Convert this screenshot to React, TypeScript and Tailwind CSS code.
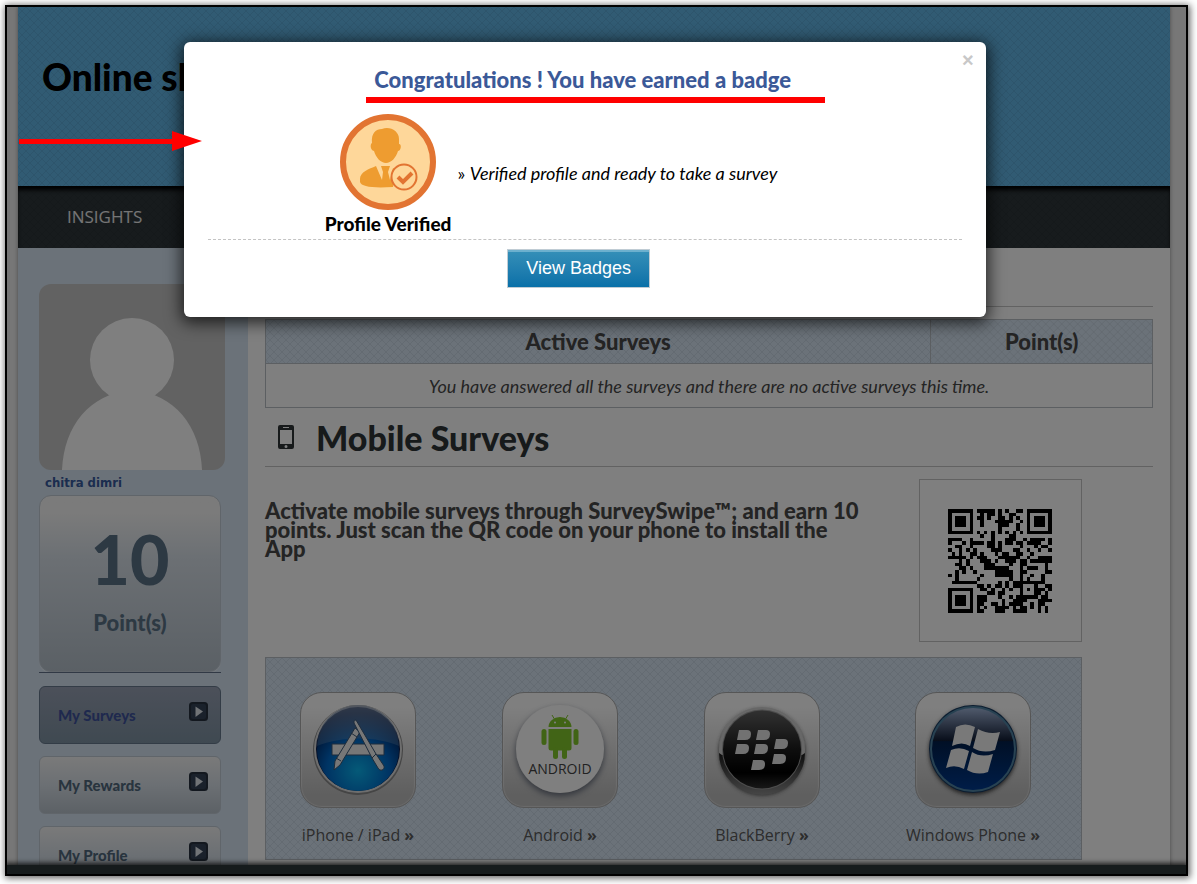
import type { ReactNode } from 'react'
import { clsx } from 'clsx'

const QR_ROWS = [
  '#######.#####.#.#..##.#######',
  '#.....#..#.##.#..##...#.....#',
  '#.###.#.##.#..##.#.#..#.###.#',
  '#.###.#..#...#####..#.#.###.#',
  '#.###.#..#....###..#..#.###.#',
  '#.....#.......#....#..#.....#',
  '#######.#.#.#.#.#.#.#.#######',
  '.........#..#....##..........',
  '####..#.....#...###..#.####.#',
  '#...#.####.##.#.##.##.####..#',
  '..##..#....##.#.....#...#.##.',
  '#..#.#.#....###...##..#..#..#',
  '.#.#..##.#...#.##..##..#.....',
  '#####.#.###...######..#..####',
  '...#.#...###.#..###.##.######',
  '..##.#....###....#..##.....#.',
  '...##.#...#######...#.###..#.',
  '..#.#..#.....#####..##.....##',
  '#.#......#...#####..#..#..#..',
  '..#.....#........#..#.#...#..',
  '.#######......#.#.#########..',
  '........##.#.##.#.###...#..##',
  '#######..##.#..#.#..#.#.###.#',
  '#.....#....##.##....#...##.#.',
  '#.###.#.###...#..#.######.##.',
  '#.###.#.###....#..####...####',
  '#.###.#.##..##.#.####..#.##..',
  '#.....#.#.#..####.#.##.#.#.#.',
  '#######.##...###..####...#.#.',
]

const MENU = [
  { label: 'My Surveys', active: true },
  { label: 'My Rewards', active: false },
  { label: 'My Profile', active: false },
]

const hatch =
  'bg-[linear-gradient(45deg,transparent_46%,#0000000f_46%,#0000000f_54%,transparent_54%),linear-gradient(-45deg,transparent_46%,#0000000f_46%,#0000000f_54%,transparent_54%)] bg-size-[8px_8px]'

export default function App() {
  return (
    <div className="h-screen bg-white pt-[5px] pr-[9px] pb-2 pl-[5px] font-['Lato',sans-serif]">
      <div className="relative h-full overflow-hidden border-2 border-black bg-[#eeeeee] pr-4 pl-[11px] shadow-[1px_1px_7px_1px_#000000a0]">
        <div className="shadow-[0_0_4px_#00000060]">
          <Header />
          <div className="flex bg-white">
            <Sidebar />
            <Surveys />
          </div>
        </div>
        <div className="absolute inset-x-0 bottom-0 h-[9px] bg-[#2c3738] shadow-[0_0_5px_2px_#000000c0]" />
        <div className="absolute inset-0 bg-black/50" />
        <BadgeDialog />
        <Pointer />
      </div>
    </div>
  )
}

function Header() {
  return (
    <header>
      <div className={clsx('h-[179px] bg-[#62b6e6] px-6 pt-[46px]', hatch)}>
        <h1 className="text-[37px] leading-[48px] font-black text-black">Online shopping</h1>
      </div>
      <nav
        className={clsx(
          'flex h-[62px] items-center bg-[#2e363a] px-[49px] shadow-[inset_0_5px_4px_-1px_#000000]',
          hatch,
        )}
      >
        <a href="#insights" className="font-['Open_Sans',sans-serif] text-[17px] text-white/90">
          INSIGHTS
        </a>
      </nav>
    </header>
  )
}

function Sidebar() {
  return (
    <aside className="w-[230px] shrink-0 bg-[#d6e4f2] pt-9 pl-[21px]">
      <svg viewBox="0 0 186 186" className="size-[186px] rounded-xl bg-[#c5c5c5]" role="img" aria-label="chitra dimri">
        <circle cx="93" cy="76" r="42" fill="#fff" />
        <path d="M23 186C25 142 50 110 93 106c43 4 68 36 70 80z" fill="#fff" />
      </svg>
      <a
        href="#profile"
        className="block pl-1.5 font-['DejaVu_Sans_Condensed','DejaVu_Sans',sans-serif] text-[13px] leading-[25px] font-bold text-[#365a9e]"
      >
        chitra dimri
      </a>
      <div className="flex h-[177px] w-[182px] flex-col items-center rounded-xl border border-[#c0cad4] bg-linear-to-b from-[#f6f6f6] from-10% via-[#d8e0e8] via-35% to-[#b6c1cb] pt-[30px] font-black text-[#5a7287] shadow-[0_1px_1px_#ffffff80]">
        <span className="text-[68px] leading-[66px]">10</span>
        <span className="mt-[15px] text-[22px] leading-8">Point(s)</span>
      </div>
      <div className="w-[182px] border-b border-[#62738a]" />
      <ul className="mt-[13px] flex w-[182px] flex-col gap-3">
        {MENU.map(({ label, active }) => (
          <li key={label}>
            <a
              href="#menu"
              className={clsx(
                'flex h-[58px] items-center justify-between rounded-md border bg-linear-to-b pr-3 pl-[18px] text-[15px] font-black',
                active
                  ? 'border-[#66788c] from-[#98a1b4] to-[#7f93a3] text-[#3e539c]'
                  : 'border-[#c0cad4] from-[#f4f4f4] via-[#d8e0e8] to-[#b9c3cc] text-[#50687d]',
              )}
            >
              {label}
              <ArrowBox />
            </a>
          </li>
        ))}
      </ul>
    </aside>
  )
}

function ArrowBox() {
  return (
    <svg viewBox="0 0 19 19" className="mb-2 size-[19px]" aria-hidden="true">
      <rect width="19" height="19" rx="3.5" fill="#26303e" />
      <rect x="2" y="2" width="15" height="15" rx="2" fill="#344256" />
      <path d="M6.500 4.500 14 9.500 6.500 15z" fill="#e2e8ee" />
    </svg>
  )
}

function Surveys() {
  return (
    <main className="min-w-0 grow px-[17px] pt-[58px] text-[#484848]">
      <hr className="border-[#c4c4c4]" />
      <table className="mt-3 w-full border-collapse border border-[#b8bec4] text-center">
        <thead>
          <tr className={clsx('h-11 bg-[#d6e4f2] text-[22px]', hatch)}>
            <th className="w-3/4 border border-[#b8bec4] font-black">Active Surveys</th>
            <th className="border border-[#b8bec4] font-black">Point(s)</th>
          </tr>
        </thead>
        <tbody>
          <tr className="h-11">
            <td colSpan={2} className="text-lg italic">
              You have answered all the surveys and there are no active surveys this time.
            </td>
          </tr>
        </tbody>
      </table>

      <h2 className="flex h-[59px] items-center gap-[22px] border-b border-[#c4c4c4] pl-[13px] text-[34px] font-black text-[#2f3537]">
        <svg viewBox="0 0 16 24" className="h-6 w-4" aria-hidden="true">
          <path
            fillRule="evenodd"
            fill="#2f3537"
            d="M2 0h12a2 2 0 0 1 2 2v20a2 2 0 0 1-2 2H2a2 2 0 0 1-2-2V2a2 2 0 0 1 2-2zM2 5v14h12V5zM5 2v1h6V2zM8 20a1.500 1.500 0 1 0 0 3 1.500 1.500 0 0 0 0-3z"
          />
        </svg>
        Mobile Surveys
      </h2>

      <div className="w-[92%]">
        <div className="mt-3 flex justify-between">
          <p className="mt-[22px] w-[600px] text-[22px] leading-[19px] font-black">
            Activate mobile surveys through SurveySwipe™; and earn 10 points. Just scan the QR code on your phone to
            install the App
          </p>
          <div className="flex size-[163px] shrink-0 items-center justify-center border border-[#c4c4c4]">
            <QrCode />
          </div>
        </div>

        <div
          className={clsx('mt-[15px] flex h-[203px] gap-[86px] border border-[#b8bec4] bg-[#d6e4f2] pt-[34px] pl-[34px]', hatch)}
        >
          <Platform name="iPhone / iPad">
            <AppStoreLogo />
          </Platform>
          <Platform name="Android">
            <AndroidLogo />
          </Platform>
          <Platform name="BlackBerry">
            <BlackBerryLogo />
          </Platform>
          <Platform name="Windows Phone">
            <WindowsLogo />
          </Platform>
        </div>
      </div>
    </main>
  )
}

function QrCode() {
  return (
    <svg viewBox="0 0 29 29" className="size-[104px]" shapeRendering="crispEdges" role="img" aria-label="QR code">
      {QR_ROWS.map((row, y) =>
        [...row].map((cell, x) => (cell === '#' ? <rect key={`${x}-${y}`} x={x} y={y} width="1" height="1" /> : null)),
      )}
    </svg>
  )
}

interface PlatformProps {
  name: string
  children: ReactNode
}
function Platform({ name, children }: PlatformProps) {
  return (
    <a
      href="#install"
      className="flex shrink-0 flex-col items-center gap-[15px] font-['Open_Sans',sans-serif] text-base whitespace-nowrap text-[#5a5a5a]"
    >
      <span className="size-[116px] rounded-[22px] border border-[#adadad] bg-linear-to-b from-white from-12% via-[#dedede] via-50% to-[#bebebe] to-90% shadow-[inset_0_0_1px_1px_#ffffff60]">
        {children}
      </span>
      <span>
        {name} <b>»</b>
      </span>
    </a>
  )
}

function AppStoreLogo() {
  return (
    <svg viewBox="0 0 114 114" className="size-[114px]" aria-hidden="true">
      <defs>
        <radialGradient id="store" cx="50%" cy="75%" r="70%">
          <stop offset="0" stopColor="#0ab4f0" />
          <stop offset="0.55" stopColor="#0068c8" />
          <stop offset="1" stopColor="#00184c" />
        </radialGradient>
        <linearGradient id="storeGloss" x1="0" y1="0" x2="0" y2="1">
          <stop offset="0" stopColor="#8a98b0" stopOpacity="0.7" />
          <stop offset="1" stopColor="#5a87b4" stopOpacity="0.4" />
        </linearGradient>
      </defs>
      <circle cx="57" cy="57" r="45" fill="#8a8a8a" />
      <circle cx="57" cy="56" r="44" fill="#dcdcdc" />
      <circle cx="57" cy="56" r="42" fill="#0a1c48" />
      <circle cx="57" cy="57" r="41" fill="url(#store)" />
      <path d="M16 53a41 41 0 0 1 82 0C76 43 40 43 16 53z" fill="url(#storeGloss)" />
      <g fill="#eeeeee" stroke="#3c5878" strokeWidth="1">
        <path d="M31 51h52v11H31z" />
        <path d="m54 35 5 4-20 33-6 5 1-9z" />
        <path d="m35 65 5 3M50 40l6 4" />
        <path d="m55 27 20 34-4 4-18-35c0-2 0-3 2-3z" />
        <path d="m71 65 4-4 8 12c1 4-4 6-6 2z" />
      </g>
    </svg>
  )
}

function AndroidLogo() {
  return (
    <svg viewBox="0 0 114 114" className="size-[114px]" aria-hidden="true">
      <defs>
        <filter id="discShadow" x="-20%" y="-20%" width="140%" height="140%">
          <feDropShadow dx="0" dy="3" stdDeviation="3" floodColor="#5a6070" floodOpacity="0.9" />
        </filter>
      </defs>
      <circle cx="57" cy="56" r="44" fill="#fff" filter="url(#discShadow)" />
      <g fill="#83c82c">
        <path d="M45.500 34a11.500 10 0 0 1 23 0z" />
        <path d="M45.500 36h23v19q0 2.500-2.500 2.500H48q-2.500 0-2.500-2.500z" />
        <rect x="38.500" y="36" width="5" height="16" rx="2.500" />
        <rect x="70.500" y="36" width="5" height="16" rx="2.500" />
        <rect x="50" y="54" width="5" height="12" rx="2.500" />
        <rect x="59" y="54" width="5" height="12" rx="2.500" />
        <path d="m49 22 3 5M65 22l-3 5" stroke="#83c82c" />
      </g>
      <circle cx="52" cy="29.500" r="1" fill="#fff" />
      <circle cx="62" cy="29.500" r="1" fill="#fff" />
      <text x="57" y="81" textAnchor="middle" fontSize="14" fill="#444">
        ANDROID
      </text>
    </svg>
  )
}

function BlackBerryLogo() {
  // lower left corner of each seed
  const seeds = [
    [32, 47],
    [51, 47],
    [30, 61],
    [49, 61],
    [69, 56],
    [67, 71],
    [46, 77],
  ]
  return (
    <svg viewBox="0 0 114 114" className="size-[114px]" aria-hidden="true">
      <defs>
        <linearGradient id="berry" x1="0" y1="0" x2="0" y2="1">
          <stop offset="0" stopColor="#626262" />
          <stop offset="0.5" stopColor="#1c1c1c" />
          <stop offset="0.8" stopColor="#000" />
          <stop offset="1" stopColor="#303030" />
        </linearGradient>
        <linearGradient id="berryRim" x1="0" y1="0" x2="0" y2="1">
          <stop offset="0" stopColor="#1c1c1c" />
          <stop offset="1" stopColor="#8c8c8c" />
        </linearGradient>
        <filter id="berryShadow" x="-20%" y="-20%" width="140%" height="140%">
          <feDropShadow dx="0" dy="2" stdDeviation="2" floodColor="#303030" floodOpacity="0.9" />
        </filter>
      </defs>
      <circle cx="57" cy="57" r="43" fill="#cecece" filter="url(#berryShadow)" />
      <path d="M14 60a43 42 0 0 0 86 0l-3 2H17z" fill="url(#berryRim)" />
      <circle cx="57" cy="56.500" r="40" fill="#9a9a9a" />
      <circle cx="57" cy="56.500" r="39" fill="url(#berry)" />
      {seeds.map(([x, y]) => (
        <path key={`${x}-${y}`} transform={`translate(${x} ${y})`} d="M0 0 2-10h8q4 0 4 4 0 6-6 6z" fill="#e4e4e4" />
      ))}
    </svg>
  )
}

function WindowsLogo() {
  return (
    <svg viewBox="0 0 114 114" className="size-[114px]" aria-hidden="true">
      <defs>
        <linearGradient id="orb" x1="0" y1="0" x2="0" y2="1">
          <stop offset="0" stopColor="#a0b4d8" />
          <stop offset="0.4" stopColor="#101c34" />
          <stop offset="0.41" stopColor="#02204c" />
          <stop offset="1" stopColor="#003a90" />
        </linearGradient>
        <filter id="orbShadow" x="-20%" y="-20%" width="140%" height="140%">
          <feDropShadow dx="0" dy="2" stdDeviation="2" floodColor="#303030" floodOpacity="0.9" />
        </filter>
      </defs>
      <circle cx="57" cy="56" r="44" fill="#173a60" filter="url(#orbShadow)" />
      <circle cx="57" cy="56" r="43" fill="#5084a4" />
      <circle cx="57" cy="56" r="41" fill="url(#orb)" />
      <g fill="#f2f2f2">
        <path d="M40 34q9-5 19 0l-5 19q-8-5-18 0z" />
        <path d="M62 36q11 6 22 3l-5 18q-12 4-22-2z" />
        <path d="M35 57q9-4 18 1l-5 18q-9-5-18-1z" />
        <path d="M56 59q9 6 21 2l-5 18q-11 4-21-2z" />
      </g>
    </svg>
  )
}

function BadgeDialog() {
  return (
    <section
      role="dialog"
      aria-labelledby="badge-title"
      className="absolute top-[35px] left-[15%] w-[68%] rounded-md bg-white px-6 pt-[25px] pb-[29px] text-black shadow-[0_3px_16px_3px_#000000b0]"
    >
      <button
        type="button"
        aria-label="Close"
        className="absolute top-1 right-3 font-['Liberation_Sans',sans-serif] text-xl font-bold text-[#c8c8c8]"
      >
        ×
      </button>
      <h2 id="badge-title" className="pr-1 text-center text-[22px] leading-[26px] font-black text-[#3b5998]">
        Congratulations ! You have earned a badge
      </h2>
      <div className="mt-1 ml-[158px] h-1.5 w-[459px] bg-[#ff0000]" />
      <div className="mt-[11px] flex gap-1.5 pl-[117px]">
        <figure className="flex flex-col items-center">
          <ProfileBadge />
          <figcaption className="text-[19px] leading-7 font-black">Profile Verified</figcaption>
        </figure>
        <p className="pt-[47px] text-lg leading-6">
          » <em>Verified profile and ready to take a survey</em>
        </p>
      </div>
      <div className="mt-px border-t border-dashed border-[#c4c4c4]" />
      <div className="mt-[9px] flex justify-center pr-3">
        <button
          type="button"
          className="h-[39px] border border-[#c0ccd4] bg-linear-to-b from-[#3590b8] to-[#0870a8] px-[18px] pb-0.5 font-['Liberation_Sans',sans-serif] text-lg text-white shadow-[inset_0_2px_0_#6cb0ce]"
        >
          View Badges
        </button>
      </div>
    </section>
  )
}

function ProfileBadge() {
  return (
    <svg viewBox="0 0 96 96" className="size-24" aria-hidden="true">
      <circle cx="48" cy="48" r="45" fill="#fed79a" stroke="#e27432" strokeWidth="6" />
      <path
        d="M32 29C31 19 36 15 42 15c8-3 17 2 17 10v5c3 0 2 7-1 7-2 7-7 12-12 12s-10-5-12-12c-4-1-4-7-2-8z"
        fill="#ee9c30"
      />
      <path d="M20 65c0-7 9-10 16-13l6 14 1-8-2-6h9l-2 6 2 8 3-12 4 2-4 17q-31 2-33-5z" fill="#ee9c30" />
      <circle cx="64" cy="63" r="12.500" fill="#fed79a" stroke="#e27432" strokeWidth="2" />
      <path d="m58 63 5 5 9-9" fill="none" stroke="#e27432" strokeWidth="4" />
    </svg>
  )
}

function Pointer() {
  return (
    <svg viewBox="0 0 183 20" className="absolute top-[124px] left-3 h-5 w-[183px]" aria-hidden="true">
      <path d="M0 8h153V0l30 10-30 10v-7H0z" fill="#f00" />
    </svg>
  )
}
